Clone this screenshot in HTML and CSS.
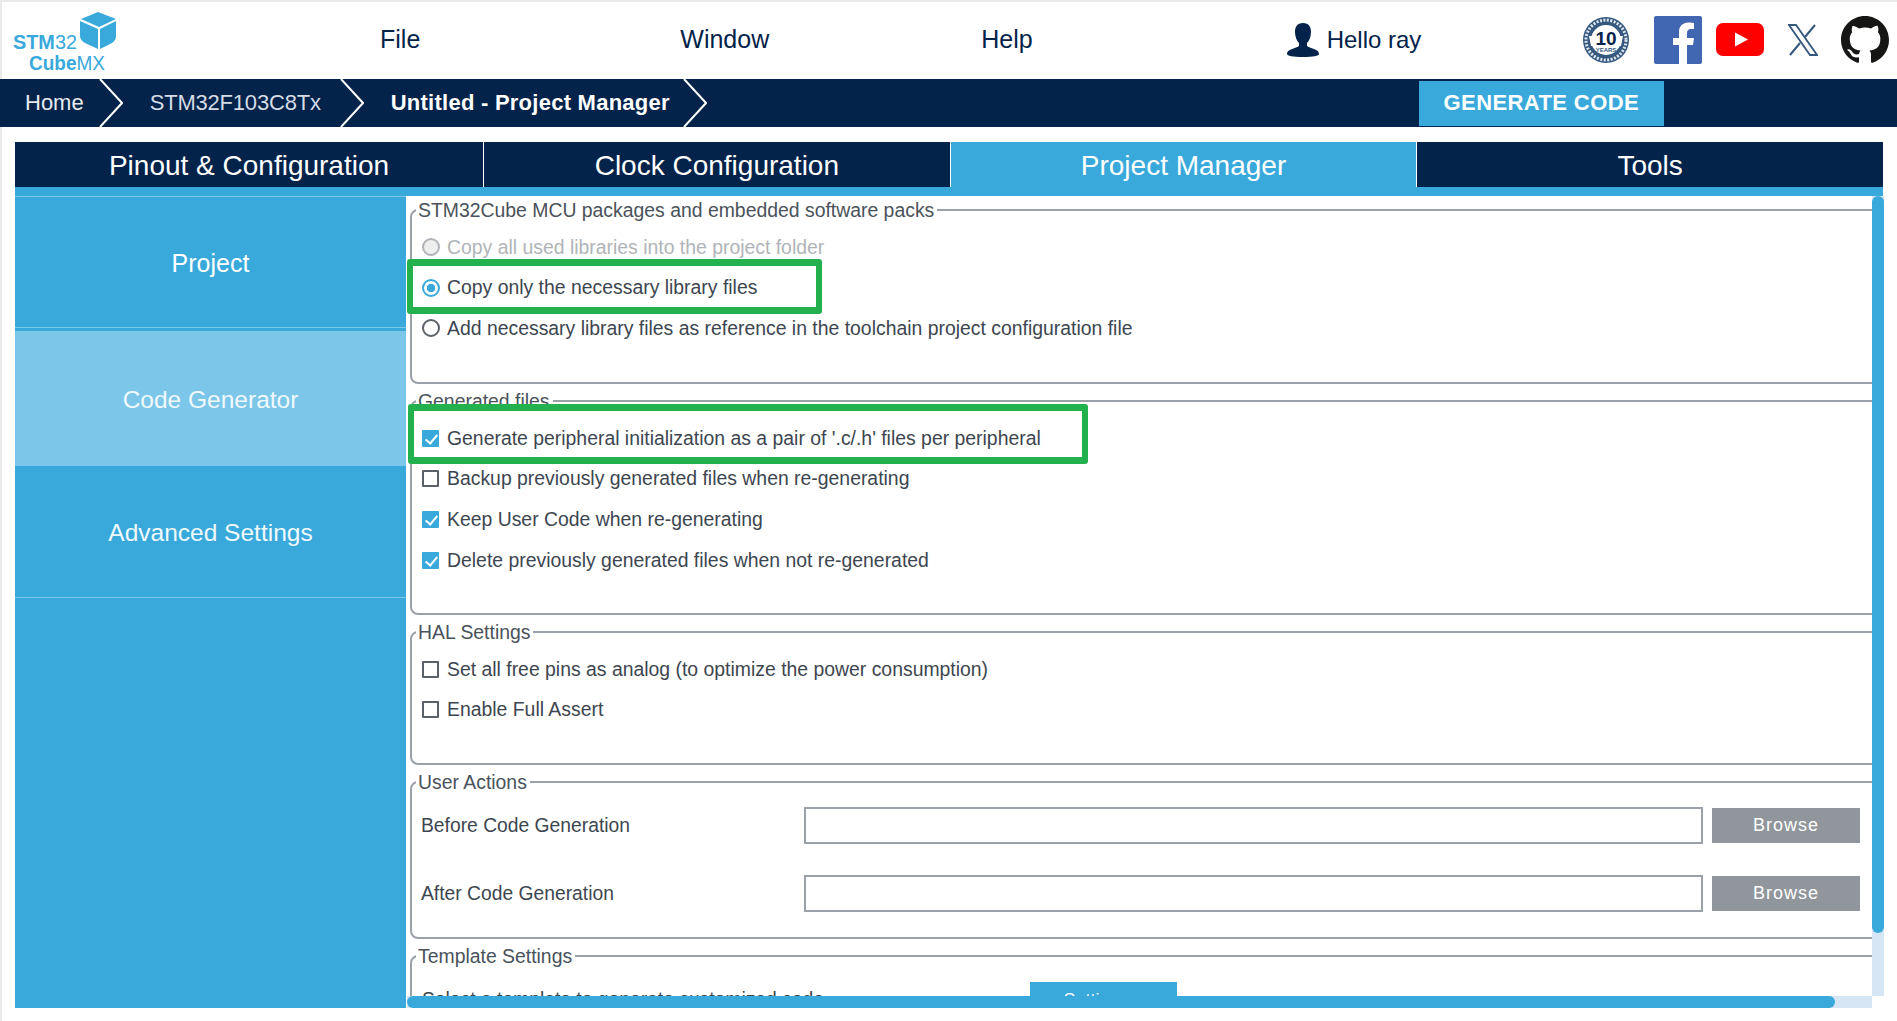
FILE: index.html
```html
<!DOCTYPE html>
<html lang="en">
<head>
  <meta charset="UTF-8" />
  <title>STM32CubeMX Untitled: STM32F103C8Tx</title>
  <link rel="stylesheet" href="styles.css">
</head>
<body>
  <!-- Top menu -->
  <header class="topbar">
    <svg class="logo" viewBox="0 0 110 66" width="110" height="66">
      <path d="M70 7 L87 0 L105 7 L88 15 Z" fill="#39a9dc"/>
      <path d="M69 9 L87 17 L87 37 L74 31 Q69 28 69 24 Z" fill="#39a9dc"/>
      <path d="M105 9 L89 17 L89 37 L101 31 Q105 28 105 24 Z" fill="#39a9dc"/>
      <text x="2" y="37" class="logo-text" textLength="64" lengthAdjust="spacingAndGlyphs"><tspan font-weight="700">STM</tspan>32</text>
      <text x="18" y="58" class="logo-text" textLength="76" lengthAdjust="spacingAndGlyphs"><tspan font-weight="700">Cube</tspan>MX</text>
    </svg>
    <nav class="menu">
      <a class="menu-file">File</a>
      <a class="menu-window">Window</a>
      <a class="menu-help">Help</a>
    </nav>
    <div class="user">
      <svg viewBox="0 0 32 34" width="32" height="34">
        <path d="M16 0 C10 0 8 4 8 9 C8 14 10 18 12 20 L12 23 C8 26 0 26 0 31 C0 33 6 34 16 34 C26 34 32 33 32 31 C32 26 24 26 20 23 L20 20 C22 18 24 14 24 9 C24 4 22 0 16 0 Z" fill="#03234b"/>
      </svg>
      <span>Hello ray</span>
    </div>
    <div class="social">
      <svg class="badge" viewBox="0 0 48 48" width="48" height="48">
        <circle cx="24" cy="24" r="23" fill="#35587f"/>
        <circle cx="24" cy="24" r="20" fill="none" stroke="#dfe6ee" stroke-width="3" stroke-dasharray="2 1.5"/>
        <circle cx="24" cy="24" r="15" fill="#fff"/>
        <path d="M7 20 L41 20 L39 30 L9 30 Z" fill="#fff"/>
        <text x="24" y="29" class="badge-text">10</text>
        <text x="24" y="36" class="badge-small">YEARS</text>
      </svg>
      <svg class="fb" viewBox="0 0 48 48" width="48" height="48">
        <rect width="48" height="48" rx="2" fill="#4267b2"/>
        <path d="M33 48 L33 29 L39 29 L40 22 L33 22 L33 17 C33 15 34 13 37 13 L40 13 L40 7 C39 7 37 6.500 34.500 6.500 C29 6.500 25 10 25 16 L25 22 L19 22 L19 29 L25 29 L25 48 Z" fill="#fff"/>
      </svg>
      <svg class="yt" viewBox="0 0 48 33" width="48" height="33">
        <rect width="48" height="33" rx="7" fill="#f00"/>
        <path d="M19 9.500 L32 16.500 L19 23.500 Z" fill="#fff"/>
      </svg>
      <svg class="x" viewBox="0 0 30 32" width="30" height="32">
        <path d="M1 1 L8 1 L29 31 L22 31 Z" fill="none" stroke="#35587f" stroke-width="1.800"/>
        <path d="M27 1 L17 13 M12 19 L2 31" fill="none" stroke="#35587f" stroke-width="2"/>
      </svg>
      <svg class="gh" viewBox="0 0 16 16" width="48" height="48">
        <path fill="#161614" d="M8 0C3.580 0 0 3.580 0 8c0 3.540 2.290 6.530 5.470 7.590.4.070.55-.17.55-.38 0-.19-.01-.82-.01-1.490-2.010.37-2.530-.49-2.690-.94-.09-.23-.48-.94-.82-1.130-.28-.15-.68-.52-.01-.53.630-.01 1.080.58 1.230.82.720 1.210 1.870.87 2.330.66.070-.52.280-.87.510-1.070-1.780-.2-3.640-.89-3.640-3.950 0-.87.310-1.590.820-2.150-.08-.2-.36-1.020.08-2.120 0 0 .67-.21 2.200.82.640-.18 1.320-.27 2-.27s1.360.09 2 .27c1.530-1.040 2.200-.82 2.200-.82.440 1.100.160 1.920.08 2.120.51.560.82 1.270.82 2.150 0 3.070-1.870 3.750-3.650 3.950.29.250.54.730.54 1.480 0 1.070-.01 1.930-.01 2.200 0 .21.150.46.550.38A8.010 8.010 0 0 0 16 8c0-4.420-3.580-8-8-8z"/>
      </svg>
    </div>
  </header>

  <!-- Breadcrumb -->
  <div class="crumbs">
    <span class="crumb crumb-home">Home</span>
    <svg class="chev" viewBox="0 0 24 48" width="24" height="48"><path d="M1 0 L23 24 L1 48" /></svg>
    <span class="crumb crumb-mcu">STM32F103C8Tx</span>
    <svg class="chev" viewBox="0 0 24 48" width="24" height="48"><path d="M1 0 L23 24 L1 48" /></svg>
    <span class="crumb crumb-current">Untitled - Project Manager</span>
    <svg class="chev" viewBox="0 0 24 48" width="24" height="48"><path d="M1 0 L23 24 L1 48" /></svg>
    <button class="generate">GENERATE CODE</button>
  </div>

  <!-- Main tabs -->
  <div class="tabs">
    <div class="tab">Pinout &amp; Configuration</div>
    <div class="tab">Clock Configuration</div>
    <div class="tab active">Project Manager</div>
    <div class="tab">Tools</div>
  </div>
  <div class="tab-band"></div>

  <div class="workspace">
    <aside class="sidebar">
      <div class="side-item side-project">Project</div>
      <div class="side-item side-code">Code Generator</div>
      <div class="side-item side-advanced">Advanced Settings</div>
    </aside>

    <div class="content-col">
      <main class="content">
        <fieldset class="group group-packs">
          <legend>STM32Cube MCU packages and embedded software packs</legend>
          <label class="opt disabled"><span class="radio"></span>Copy all used libraries into the project folder</label>
          <label class="opt"><span class="radio checked"></span>Copy only the necessary library files</label>
          <label class="opt"><span class="radio"></span>Add necessary library files as reference in the toolchain project configuration file</label>
        </fieldset>

        <fieldset class="group group-files">
          <legend>Generated files</legend>
          <label class="opt"><span class="check checked"></span>Generate peripheral initialization as a pair of '.c/.h' files per peripheral</label>
          <label class="opt"><span class="check"></span>Backup previously generated files when re-generating</label>
          <label class="opt"><span class="check checked"></span>Keep User Code when re-generating</label>
          <label class="opt"><span class="check checked"></span>Delete previously generated files when not re-generated</label>
        </fieldset>

        <fieldset class="group group-hal">
          <legend>HAL Settings</legend>
          <label class="opt"><span class="check"></span>Set all free pins as analog (to optimize the power consumption)</label>
          <label class="opt"><span class="check"></span>Enable Full Assert</label>
        </fieldset>

        <fieldset class="group group-actions">
          <legend>User Actions</legend>
          <div class="action-row">
            <span class="action-label">Before Code Generation</span>
            <input class="action-input" type="text" />
            <button class="browse">Browse</button>
          </div>
          <div class="action-row">
            <span class="action-label">After Code Generation</span>
            <input class="action-input" type="text" />
            <button class="browse">Browse</button>
          </div>
        </fieldset>

        <fieldset class="group group-template">
          <legend>Template Settings</legend>
          <div class="template-row">
            <span class="template-label">Select a template to generate customized code</span>
            <button class="settings">Settings...</button>
          </div>
        </fieldset>

        <!-- green highlights drawn on top of the screenshot -->
        <div class="mark mark-one"></div>
        <div class="mark mark-two"></div>
      </main>
      <div class="hscroll"><div class="hthumb"></div></div>
    </div>

    <div class="vscroll"><div class="vthumb"></div></div>
  </div>
</body>
</html>
```

FILE: styles.css
```css
/* General */
* {
  box-sizing: border-box;
}

html,
body {
  height: 100%;
}

body {
  margin: 0;
  background-color: #fff;
  box-shadow: inset 2px 0 #eaeaea;
  font-family: 'Liberation Sans', Arial, sans-serif;
  color: #3d4650;
  overflow: hidden;
}

/* Top menu */
.topbar {
  display: flex;
  align-items: center;
  height: 79px;
  padding-bottom: 2px;
  border-top: 2px solid #eaeaea;
}

.logo {
  margin-left: 11px;
  margin-top: 10px;
  flex: none;
}

.logo-text {
  font-size: 21px;
  fill: #39a9dc;
}

.menu {
  display: flex;
  font-size: 25px;
  color: #03234b;
  margin-left: 259px;
}

.menu-window {
  margin-left: 260px;
}

.menu-help {
  margin-left: 212px;
}

.user {
  display: flex;
  align-items: center;
  gap: 8px;
  margin-left: 254px;
  font-size: 24px;
  color: #03234b;
  white-space: nowrap;
}

.user svg {
  flex: none;
}

.social {
  display: flex;
  flex: none;
  align-items: center;
  margin-left: 161px;
}

.fb {
  margin-left: 24px;
}

.yt {
  margin-left: 14px;
}

.x {
  margin-left: 24px;
}

.gh {
  margin-left: 23px;
}

.badge-text {
  font-size: 19px;
  font-weight: 700;
  text-anchor: middle;
  fill: #03234b;
}

.badge-small {
  font-size: 6px;
  font-weight: 700;
  text-anchor: middle;
  fill: #35587f;
}

/* Breadcrumb */
.crumbs {
  display: flex;
  align-items: center;
  height: 48px;
  background-color: #03234b;
  color: #fff;
  font-size: 22px;
}

.chev {
  flex: none;
}

.chev path {
  fill: none;
  stroke: #fff;
  stroke-width: 2;
}

.crumb-home {
  margin-left: 25px;
  margin-right: 15px;
  color: #e6ebf0;
}

.crumb-mcu {
  margin-left: 27px;
  margin-right: 19px;
  letter-spacing: -0.2px;
  color: #d5dce4;
}

.crumb-current {
  margin-left: 27px;
  margin-right: 13px;
  letter-spacing: 0.25px;
  font-weight: 700;
}

.generate {
  width: 245px;
  height: 45px;
  margin-left: 712px;
  border: none;
  background-color: #39a9dc;
  color: #fff;
  font-family: inherit;
  font-size: 22px;
  font-weight: 700;
  letter-spacing: 0.4px;
}

/* Tabs */
.tabs {
  display: grid;
  grid-template-columns: 468px repeat(3, 1fr);
  gap: 1px;
  height: 45px;
  margin: 15px 14px 0 15px;
}

.tab {
  display: flex;
  align-items: center;
  justify-content: center;
  padding-top: 2px;
  background-color: #03234b;
  color: #fff;
  font-size: 28px;
}

.tab.active {
  background-color: #39a9dc;
}

.tab-band {
  height: 9px;
  margin: 0 14px 0 15px;
  background-color: #39a9dc;
}

/* Workspace */
.workspace {
  display: flex;
  height: 812px;
  margin-left: 15px;
}

.sidebar {
  flex: none;
  width: 391px;
  background-color: #39a9dc;
  color: #f0f9fd;
  font-size: 24.500px;
}

.side-item {
  display: flex;
  align-items: center;
  justify-content: center;
  padding-top: 2px;
}

.side-project {
  height: 132px;
  border-top: 1px solid #7cc6e9;
  border-bottom: 1px solid #7cc6e9;
  color: #fff;
  font-size: 25px;
}

.side-code {
  height: 135px;
  margin-top: 3px;
  background-color: #7cc6e9;
}

.side-advanced {
  height: 132px;
  border-bottom: 1px solid #7cc6e9;
}

.content-col {
  flex: none;
  width: 1465px;
  margin-left: 1px;
  display: flex;
  flex-direction: column;
}

.content {
  position: relative;
  height: 800px;
  overflow: hidden;
  padding-left: 3px;
}

/* Groups */
.group {
  width: 1500px;
  margin: 0 0 3px;
  padding: 3px 0 0 10px;
  border: 2px solid #9aa1a8;
  border-radius: 8px;
  min-width: 0;
}

.group legend {
  margin-left: -6px;
  padding: 0 3px 0 2px;
  font-size: 19.400px;
  line-height: 28px;
  color: #4a525b;
}

.group-packs {
  height: 188px;
}

.group-files {
  height: 228px;
}

.group-hal {
  height: 147px;
}

.group-actions {
  height: 171px;
}

.group-template {
  height: 200px;
}

.opt {
  display: flex;
  align-items: center;
  gap: 8px;
  height: 40.600px;
  font-size: 19.400px;
  color: #3d4650;
}

.opt.disabled {
  color: #b0b4b8;
}

.radio,
.check {
  flex: none;
  width: 17px;
  height: 17px;
  border: 2px solid #5a6168;
  background-color: #fff;
}

.radio {
  width: 18px;
  height: 18px;
  margin-right: -1px;
  border-radius: 50%;
}

.disabled .radio {
  border-color: #b0b4b8;
  background-color: #eee;
}

.radio.checked {
  border-color: #39a9dc;
  background: radial-gradient(circle, #39a9dc 0 4px, #fff 4.500px);
}

.check {
  border-radius: 1px;
}

.check.checked {
  border-color: #39a9dc;
  background-color: #39a9dc;
  position: relative;
}

.check.checked::after {
  content: "";
  position: absolute;
  left: 3.500px;
  top: 0;
  width: 5px;
  height: 10px;
  border: solid #fff;
  border-width: 0 2px 2px 0;
  transform: rotate(40deg);
}

/* User actions */
.action-row {
  display: flex;
  align-items: center;
  height: 37px;
  margin-bottom: 31px;
  font-size: 19.300px;
}

.group-actions .action-row:first-of-type {
  margin-top: 8px;
}

.action-label {
  flex: none;
  width: 382px;
  margin-left: -1px;
  margin-right: 1px;
}

.action-input {
  flex: none;
  width: 899px;
  height: 37px;
  border: 2px solid #9aa1a8;
  background-color: #fff;
}

.browse {
  width: 148px;
  height: 35px;
  margin-left: 9px;
  border: none;
  background-color: #90969c;
  color: #fff;
  font-family: inherit;
  font-size: 18px;
  letter-spacing: 1px;
}

/* Template settings, mostly cut off by the scroll area */
.template-row {
  display: flex;
  align-items: flex-start;
  margin-top: 9px;
  font-size: 19.300px;
}

.template-label {
  flex: none;
  width: 608px;
  padding-top: 7px;
  white-space: nowrap;
}

.settings {
  width: 147px;
  height: 36px;
  border: none;
  background-color: #39a9dc;
  color: #fff;
  font-family: inherit;
  font-size: 18px;
}

/* Green highlight boxes */
.mark {
  position: absolute;
  border-style: solid;
  border-color: #22b14c;
  border-width: 7px 6px;
  border-radius: 3px;
}

.mark-one {
  left: 0;
  top: 63px;
  width: 415px;
  height: 55px;
}

.mark-two {
  left: 1px;
  top: 208px;
  width: 680px;
  height: 60px;
}

/* Scrollbars */
.hscroll {
  height: 12px;
  background-color: #d6e6f5;
}

.hthumb {
  width: 1428px;
  height: 12px;
  background-color: #39a9dc;
  border-radius: 6px;
}

.vscroll {
  flex: none;
  width: 12px;
  height: 800px;
  background-color: #d6e6f5;
}

.vthumb {
  height: 737px;
  background-color: #39a9dc;
  border-radius: 6px;
}
```
